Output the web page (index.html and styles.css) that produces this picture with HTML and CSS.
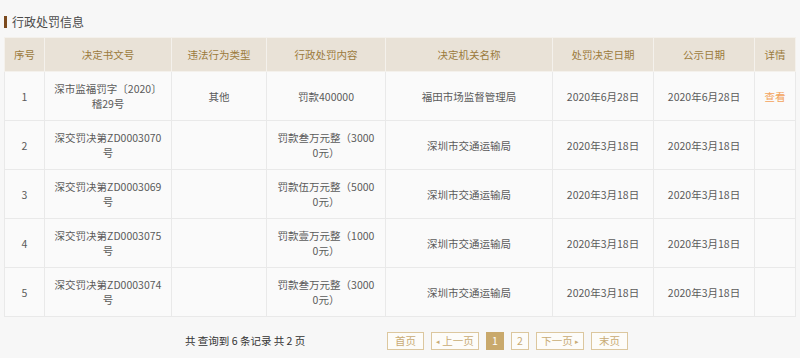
FILE: index.html
```html
<!DOCTYPE html>
<html lang="zh-CN">
<head>
<meta charset="utf-8">
<title>行政处罚信息</title>
<link rel="stylesheet" href="styles.css">
</head>
<body>
<div class="page">
  <h2 class="title">行政处罚信息</h2>
  <table class="grid">
    <colgroup>
      <col class="c1"><col class="c2"><col class="c3"><col class="c4"><col class="c5"><col class="c6"><col class="c7"><col class="c8">
    </colgroup>
    <thead>
      <tr>
        <th>序号</th><th>决定书文号</th><th>违法行为类型</th><th>行政处罚内容</th><th>决定机关名称</th><th>处罚决定日期</th><th>公示日期</th><th>详情</th>
      </tr>
    </thead>
    <tbody>
      <tr>
        <td>1</td><td class="doc">深市监福罚字〔2020〕稽29号</td><td>其他</td><td>罚款400000</td><td>福田市场监督管理局</td><td>2020年6月28日</td><td>2020年6月28日</td><td><a class="view" href="#">查看</a></td>
      </tr>
      <tr>
        <td>2</td><td class="doc">深交罚决第ZD0003070号</td><td></td><td>罚款叁万元整（30000元）</td><td>深圳市交通运输局</td><td>2020年3月18日</td><td>2020年3月18日</td><td></td>
      </tr>
      <tr>
        <td>3</td><td class="doc">深交罚决第ZD0003069号</td><td></td><td>罚款伍万元整（50000元）</td><td>深圳市交通运输局</td><td>2020年3月18日</td><td>2020年3月18日</td><td></td>
      </tr>
      <tr>
        <td>4</td><td class="doc">深交罚决第ZD0003075号</td><td></td><td>罚款壹万元整（10000元）</td><td>深圳市交通运输局</td><td>2020年3月18日</td><td>2020年3月18日</td><td></td>
      </tr>
      <tr>
        <td>5</td><td class="doc">深交罚决第ZD0003074号</td><td></td><td>罚款叁万元整（30000元）</td><td>深圳市交通运输局</td><td>2020年3月18日</td><td>2020年3月18日</td><td></td>
      </tr>
    </tbody>
  </table>
  <div class="pager">
    <div class="summary">共 查询到 6 条记录 共 2 页</div>
    <div class="pages">
      <a class="pbtn w37" href="#">首页</a>
      <a class="pbtn w48" href="#"><span class="arr">◂</span>上一页</a>
      <a class="pbtn num active" href="#">1</a>
      <a class="pbtn num" href="#">2</a>
      <a class="pbtn w48" href="#">下一页<span class="arr">▸</span></a>
      <a class="pbtn w37" href="#">末页</a>
    </div>
  </div>
</div>
</body>
</html>
```
FILE: styles.css
```css
html, body {
  margin: 0;
  padding: 0;
  background: #f7f7f7;
}
body {
  font-family: "Noto Sans CJK SC", "Noto Sans", sans-serif;
  color: #555;
}
.page {
  padding: 15px 5px 0 4px;
}
.title {
  margin: 0 0 8px 0;
  height: 14px;
  display: flex;
  align-items: center;
  gap: 5px;
  font-size: 12px;
  font-weight: normal;
  color: #4a4a4a;
  line-height: 14px;
}
.title::before {
  content: "";
  width: 3px;
  height: 12px;
  background: #7b4a1e;
}
.grid {
  width: 791px;
  border-collapse: collapse;
  table-layout: fixed;
  font-size: 10.5px;
}
.c1 { width: 40px; }
.c2 { width: 127px; }
.c3 { width: 95px; }
.c4 { width: 119px; }
.c5 { width: 167px; }
.c6 { width: 101px; }
.c7 { width: 101px; }
.c8 { width: 41px; }
.grid th {
  height: 33px;
  padding: 0 4px;
  background: #e9e2d7;
  color: #9b7a3c;
  font-weight: normal;
  border: 1px solid #f4f1ec;
  line-height: 15px;
}
.grid td {
  height: 30px;
  padding: 9px 10px;
  background: #fafafa;
  border: 1px solid #e9e9e9;
  text-align: center;
  line-height: 15px;
  color: #5a5a5a;
  word-break: break-all;
}
.grid td.doc {
  padding: 9px 5px;
}
.grid td:first-child {
  padding: 9px 2px;
}
.grid td:last-child {
  padding: 9px 2px;
}
.view {
  color: #f3a35a;
  text-decoration: none;
}
.pager {
  display: flex;
  align-items: center;
  height: 40px;
  padding-left: 181px;
}
.summary {
  width: 202px;
  font-size: 10.5px;
  color: #333;
  padding-top: 6px;
}
.pages {
  display: flex;
  gap: 7px;
  padding-top: 8px;
}
.pbtn {
  box-sizing: border-box;
  height: 18px;
  border: 1px solid #dcc79e;
  background: #fdfcf9;
  color: #c8ab74;
  font-size: 10.5px;
  line-height: 16px;
  text-decoration: none;
  display: flex;
  align-items: center;
  justify-content: center;
  gap: 2px;
}
.w37 { width: 37px; }
.w48 { width: 48px; }
.num { width: 18px; }
.pbtn.active {
  background: #c9a96c;
  border-color: #c9a96c;
  color: #fff;
}
.arr {
  font-size: 7px;
  color: #c8ab74;
}
```
